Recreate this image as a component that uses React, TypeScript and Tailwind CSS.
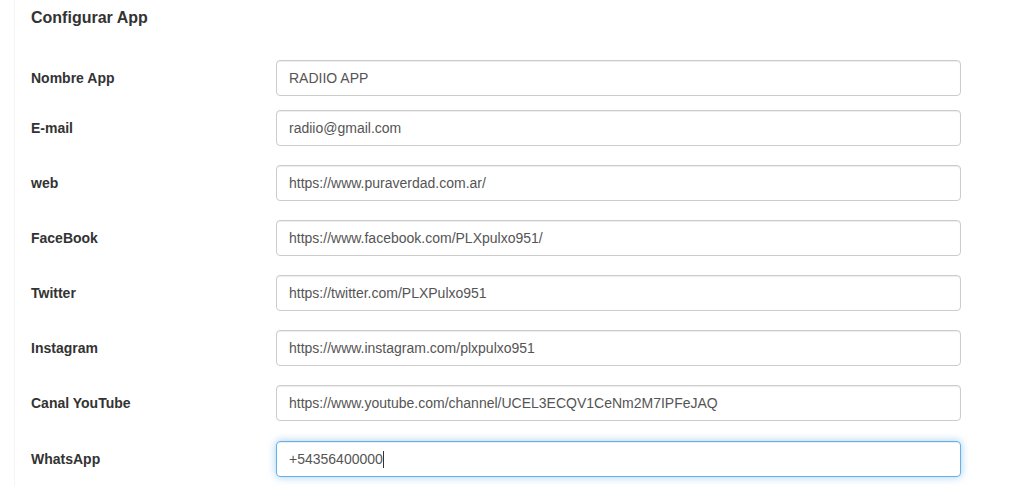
const fields = [
  { label: "Nombre App", value: "RADIIO APP" },
  { label: "E-mail", value: "radiio@gmail.com" },
  { label: "web", value: "https://www.puraverdad.com.ar/" },
  { label: "FaceBook", value: "https://www.facebook.com/PLXpulxo951/" },
  { label: "Twitter", value: "https://twitter.com/PLXPulxo951" },
  { label: "Instagram", value: "https://www.instagram.com/plxpulxo951" },
  { label: "Canal YouTube", value: "https://www.youtube.com/channel/UCEL3ECQV1CeNm2M7IPFeJAQ" },
  { label: "WhatsApp", value: "+54356400000", focused: true },
];

export default function App() {
  return (
    <div
      className="w-[1014px] h-[486px] bg-white overflow-hidden"
      style={{ fontFamily: '"Liberation Sans", Arial, sans-serif' }}
    >
      <div className="ml-[14px] h-full border-l border-[#f4f4f4] pl-[16px]">
        <h1 className="pt-[8px] text-[16px] leading-[20px] font-bold text-[#333]">Configurar App</h1>

        <div className="mt-[32px] flex flex-col">
          {fields.map((f, i) => (
            <div
              key={f.label}
              className={`flex items-center h-[36px] ${
                i === 0 ? "mb-[14px]" : i === 6 ? "mb-[20px]" : "mb-[19px]"
              }`}
            >
              <label className="w-[245px] pt-px text-[14px] font-bold text-[#333]">{f.label}</label>
              <div
                className={`w-[685px] h-[36px] flex items-center px-[12px] rounded-[4px] border text-[14px] text-[#555] ${
                  f.focused
                    ? "border-[#66afe9] shadow-[inset_0_1px_1px_rgba(0,0,0,0.075),0_0_8px_rgba(102,175,233,0.6)]"
                    : "border-[#ccc] shadow-[inset_0_1px_1px_rgba(0,0,0,0.075)]"
                }`}
              >
                <span>{f.value}</span>
                {f.focused && <span className="inline-block w-px h-[17px] bg-[#333]" />}
              </div>
            </div>
          ))}
        </div>
      </div>
    </div>
  );
}
